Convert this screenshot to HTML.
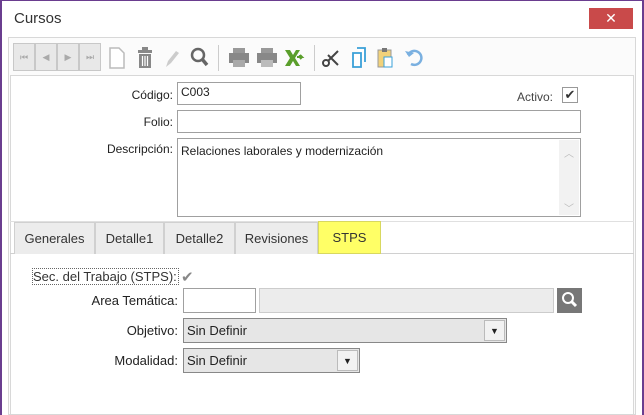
<!DOCTYPE html><html><head><style>
*{box-sizing:border-box;margin:0;padding:0}
body{width:644px;height:415px;overflow:hidden;background:#fff;font-family:"Liberation Sans",sans-serif;font-size:12px;color:#222;position:relative}
.a{position:absolute}
.lbl{position:absolute;text-align:right;font-size:12px}
.inp{position:absolute;background:#fff;border:1px solid #a0a0a0;font-size:12px;padding:2px 3px}
.nb{position:absolute;top:43px;width:22px;height:28px;background:#e8e8e8;border:1px solid #c8c8c8;color:#aaa;font-size:9px;text-align:center;line-height:26px}
.tab{position:absolute;top:222px;height:32px;background:#ececec;border:1px solid #d0d0d0;border-bottom:none;font-size:13px;color:#333;text-align:center;line-height:32px}
.ic{position:absolute;top:45px}
</style></head><body>
<div class="a" style="left:0;top:0;width:2px;height:415px;background:#6a3d8f"></div>
<div class="a" style="right:0;top:0;width:2px;height:415px;background:#6a3d8f"></div>
<div class="a" style="left:0;top:0;width:644px;height:1px;background:#6a3d8f"></div>
<div class="a" style="left:14px;top:10px;font-size:15px;color:#333">Cursos</div>
<div class="a" style="left:589px;top:8px;width:44px;height:21px;background:#c94a4a;color:#fff;text-align:center;font-size:14px;line-height:21px">✕</div>
<div class="a" style="left:8px;top:37px;width:628px;height:378px;border:1px solid #d8d8d8;background:#fbfbfb"></div>
<div class="nb" style="left:13px">⏮</div><div class="nb" style="left:35px">◀</div><div class="nb" style="left:57px">▶</div><div class="nb" style="left:79px">⏭</div>
<svg class="ic" style="left:106px" width="22" height="26"><path d="M4 3h9l5 5v15H4z" fill="#fff" stroke="#bbb" stroke-width="1.5"/></svg>
<svg class="ic" style="left:134px" width="22" height="26"><rect x="4" y="5" width="14" height="3" fill="#888"/><rect x="8" y="2" width="6" height="3" fill="#888"/><path d="M5 9h12v14H5z" fill="#888"/><path d="M8.5 11v10M11 11v10M13.5 11v10" stroke="#fff" stroke-width="1.2"/></svg>
<svg class="ic" style="left:160px" width="22" height="26"><path d="M6 22l2-6 8-10 3 2-8 10z" fill="#ccc"/></svg>
<svg class="ic" style="left:188px" width="22" height="26"><circle cx="10" cy="10" r="6" fill="none" stroke="#666" stroke-width="2.5"/><path d="M14 14l5 6" stroke="#666" stroke-width="3.5"/></svg>
<div class="a" style="left:218px;top:45px;width:1px;height:26px;background:#ccc"></div>
<svg class="ic" style="left:227px" width="24" height="26"><rect x="2" y="8" width="20" height="10" fill="#888"/><rect x="6" y="3" width="12" height="5" fill="#999"/><rect x="6" y="15" width="12" height="7" fill="#aaa"/></svg>
<svg class="ic" style="left:255px" width="24" height="26"><rect x="2" y="8" width="20" height="10" fill="#888"/><rect x="6" y="3" width="12" height="5" fill="#999"/><rect x="6" y="15" width="12" height="7" fill="#bbb"/></svg>
<svg class="ic" style="left:282px" width="24" height="26"><path d="M3 5h5l3 5 3-5h4l-5 8 5 8h-4l-3-5-3 5H3l5-8z" fill="#5a9e2b"/><path d="M15 12h5l-2-2M20 12l-2 2" stroke="#5a9e2b" stroke-width="2"/></svg>
<div class="a" style="left:314px;top:45px;width:1px;height:26px;background:#ccc"></div>
<svg class="ic" style="left:320px" width="22" height="26"><circle cx="6" cy="18" r="3" fill="none" stroke="#444" stroke-width="2"/><path d="M8 16L18 6M8 10l10 10" stroke="#444" stroke-width="2"/></svg>
<svg class="ic" style="left:348px" width="22" height="26"><path d="M5 8h8v14H5z M9 3h8v14" fill="#fff" stroke="#3aa0d8" stroke-width="1.8"/></svg>
<svg class="ic" style="left:374px" width="22" height="26"><rect x="4" y="5" width="13" height="17" fill="#f2d27a" stroke="#999"/><rect x="8" y="3" width="5" height="4" fill="#777"/><rect x="10" y="12" width="8" height="10" fill="#fff" stroke="#3aa0d8"/></svg>
<svg class="ic" style="left:402px" width="22" height="26"><path d="M6 10a7 7 0 1 1 3 9" fill="none" stroke="#7ab0e0" stroke-width="2.5"/><path d="M3 6l4 6 5-4z" fill="#7ab0e0"/></svg>
<div class="a" style="left:10px;top:75px;width:624px;height:340px;border:1px solid #d8d8d8;background:#fff"></div>
<div class="lbl" style="left:100px;width:73px;top:88px">Código:</div>
<div class="inp" style="left:177px;top:82px;width:124px;height:23px">C003</div>
<div class="lbl" style="left:480px;width:73px;top:90px;color:#444">Activo:</div>
<div class="a" style="left:562px;top:87px;width:16px;height:16px;border:1px solid #999;background:#fff;font-size:13px;line-height:14px;text-align:center;color:#333">✔</div>
<div class="lbl" style="left:100px;width:73px;top:115px">Folio:</div>
<div class="inp" style="left:177px;top:110px;width:404px;height:23px"></div>
<div class="lbl" style="left:80px;width:93px;top:142px">Descripción:</div>
<div class="inp" style="left:177px;top:138px;width:404px;height:79px;padding-top:5px">Relaciones laborales y modernización</div>
<div class="a" style="left:559px;top:140px;width:20px;height:75px;background:#f2f2f2;color:#bbb;font-size:10px;text-align:center"><div style="margin-top:5px">︿</div><div style="margin-top:40px">﹀</div></div>
<div class="a" style="left:10px;top:221px;width:624px;height:1px;background:#e0e0e0"></div>
<div class="a" style="left:10px;top:253px;width:624px;height:1px;background:#d0d0d0"></div>
<div class="tab" style="left:14px;width:81px">Generales</div>
<div class="tab" style="left:95px;width:69px">Detalle1</div>
<div class="tab" style="left:164px;width:71px">Detalle2</div>
<div class="tab" style="left:235px;width:83px">Revisiones</div>
<div class="tab" style="left:318px;width:63px;background:#ffff66;border:1px solid #d8d860;height:33px;top:221px">STPS</div>
<div class="a" style="left:32px;top:268px;width:147px;height:17px;border:1px dotted #666;font-size:13px;line-height:15px;color:#333">Sec. del Trabajo (STPS):</div>
<div class="a" style="left:181px;top:268px;font-size:15px;color:#888">✔</div>
<div class="lbl" style="left:60px;width:118px;top:293px;font-size:13px">Area Temática:</div>
<div class="inp" style="left:183px;top:288px;width:73px;height:25px"></div>
<div class="inp" style="left:259px;top:288px;width:295px;height:25px;background:#ececec;border-color:#ccc"></div>
<div class="a" style="left:557px;top:288px;width:25px;height:25px;background:#777"><svg width="25" height="25"><circle cx="11" cy="10" r="5" fill="none" stroke="#fff" stroke-width="2"/><path d="M14 13l5 5" stroke="#fff" stroke-width="3"/></svg></div>
<div class="lbl" style="left:80px;width:98px;top:323px;font-size:13px">Objetivo:</div>
<div class="inp" style="left:183px;top:318px;width:324px;height:25px;background:#e6e6e6;border-color:#888;font-size:13px;padding-top:4px">Sin Definir</div>
<div class="a" style="left:484px;top:320px;width:21px;height:21px;background:#f2f2f2;border:1px solid #bbb;font-size:9px;text-align:center;line-height:20px">▼</div>
<div class="lbl" style="left:80px;width:98px;top:353px;font-size:13px">Modalidad:</div>
<div class="inp" style="left:183px;top:348px;width:177px;height:25px;background:#e6e6e6;border-color:#888;font-size:13px;padding-top:4px">Sin Definir</div>
<div class="a" style="left:337px;top:350px;width:21px;height:21px;background:#f2f2f2;border:1px solid #bbb;font-size:9px;text-align:center;line-height:20px">▼</div>
</body></html>
